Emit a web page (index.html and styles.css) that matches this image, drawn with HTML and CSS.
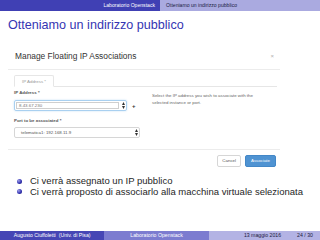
FILE: index.html
```html
<!DOCTYPE html>
<html lang="it">
<head>
    <meta charset="UTF-8">
    <title>Otteniamo un indirizzo pubblico</title>
    <link rel="stylesheet" href="styles.css">
</head>
<body>
    <!-- Barra superiore -->
    <div class="headline">
        <div class="head-left">Laboratorio Openstack</div>
        <div class="head-right">Otteniamo un indirizzo pubblico</div>
    </div>

    <h1 class="frametitle">Otteniamo un indirizzo pubblico</h1>

    <!-- Schermata del dialogo -->
    <div class="modal">
        <div class="modal-header">
            <span class="modal-title">Manage Floating IP Associations</span>
            <span class="close">&times;</span>
        </div>
        <div class="modal-body">
            <div class="tabs">
                <div class="tab">IP Address *</div>
            </div>
            <div class="form">
                <div class="fields">
                    <div class="label first">IP Address *</div>
                    <div class="ip-row">
                        <div class="ip-select">
                            <div class="ip-value">8.43.67.230</div>
                            <svg class="arrows" width="3" height="7" viewBox="0 0 3 7"><path d="M0 3 L1.5 0 L3 3 Z M0 4 L1.5 7 L3 4 Z" fill="#333"/></svg>
                        </div>
                        <span class="plus">+</span>
                    </div>
                    <div class="label">Port to be associated *</div>
                    <div class="port-select">
                        <span>telematica1: 192.168.11.9</span>
                        <svg class="arrows" width="3" height="7" viewBox="0 0 3 7"><path d="M0 3 L1.5 0 L3 3 Z M0 4 L1.5 7 L3 4 Z" fill="#333"/></svg>
                    </div>
                </div>
                <p class="help">Select the IP address you wish to associate with the<br>selected instance or port.</p>
            </div>
        </div>
        <div class="modal-footer">
            <span class="btn">Cancel</span>
            <span class="btn btn-primary">Associate</span>
        </div>
    </div>

    <ul class="bullets">
        <li>Ci verrà assegnato un IP pubblico</li>
        <li>Ci verrà proposto di associarlo alla macchina virtuale selezionata</li>
    </ul>

    <!-- Barra inferiore -->
    <div class="footline">
        <div class="foot-author">Augusto Ciuffoletti&nbsp; (Univ. di Pisa)</div>
        <div class="foot-title">Laboratorio Openstack</div>
        <div class="foot-date"><span>13 maggio 2016</span><span>24 / 30</span></div>
    </div>
</body>
</html>
```

FILE: styles.css
```css
body {
    margin: 0;
    width: 320px;
    height: 240px;
    display: flex;
    flex-direction: column;
    font-family: "Liberation Sans", Arial, sans-serif;
    background: #fff;
    color: #262626;
    overflow: hidden;
}
.headline {
    display: flex;
    height: 11px;
    font-size: 5.1px;
    line-height: 11px;
}
.head-left {
    width: 160px;
    box-sizing: border-box;
    padding-right: 5px;
    text-align: right;
    background: #4040b4;
    color: #fff;
}
.head-right {
    flex: 1;
    padding-left: 6px;
    background: #aaaae0;
    color: #1a1a40;
}
.frametitle {
    margin: 7px 0 0 8px;
    font-size: 12.6px;
    line-height: 15px;
    font-weight: normal;
    color: #3535b3;
}
.modal {
    margin: 7px 40px 0 8px;
    color: #333;
}
.modal-header {
    display: flex;
    justify-content: space-between;
    align-items: center;
    padding: 11px 6px 8px 7px;
    border-bottom: 1px solid #ececec;
}
.modal-title {
    font-size: 8.4px;
    line-height: 10px;
}
.close {
    font-size: 6px;
    line-height: 10px;
    color: #b0b0b0;
}
.modal-body {
    height: 79px;
    box-sizing: border-box;
    padding: 5px 3px 0 6px;
}
.tabs {
    display: flex;
    height: 11px;
    border-bottom: 1px solid #e6e6e6;
}
.tab {
    width: 40px;
    box-sizing: border-box;
    border: 1px solid #e6e6e6;
    border-bottom-color: #fff;
    border-radius: 2px 2px 0 0;
    margin-bottom: -1px;
    padding-left: 7px;
    font-size: 4.4px;
    line-height: 11px;
    color: #9a9a9a;
    background: #fff;
}
.form {
    display: flex;
    gap: 12px;
}
.fields {
    width: 126px;
}
.label {
    margin-top: 7px;
    font-size: 4.4px;
    line-height: 6px;
    font-weight: bold;
    color: #555;
}
.label.first {
    margin-top: 3px;
}
.ip-row {
    display: flex;
    align-items: center;
    margin-top: 4px;
    height: 11px;
}
.ip-select {
    display: flex;
    align-items: center;
    justify-content: space-between;
    width: 113px;
    height: 11px;
    box-sizing: border-box;
    padding: 1px;
    border: 1px solid #a9d0f0;
    border-radius: 2px;
    box-shadow: 0 0 2px rgba(102, 175, 233, 0.4);
}
.ip-value {
    width: 103px;
    height: 7px;
    box-sizing: border-box;
    border: 1px solid #cfcfcf;
    padding-left: 2px;
    font-size: 4.4px;
    line-height: 5px;
    color: #777;
}
.plus {
    margin-left: 5px;
    font-size: 6px;
    font-weight: bold;
    color: #333;
}
.port-select {
    display: flex;
    align-items: center;
    justify-content: space-between;
    margin-top: 3px;
    height: 11px;
    box-sizing: border-box;
    padding: 0 1px 0 6px;
    border: 1px solid #d6d6d6;
    border-radius: 2px;
    font-size: 4.4px;
    color: #555;
}
.help {
    margin: 5px 0 0;
    font-size: 4.4px;
    line-height: 7px;
    color: #666;
    white-space: nowrap;
}
.modal-footer {
    display: flex;
    justify-content: flex-end;
    gap: 4px;
    padding: 5px 4px 0 0;
    border-top: 1px solid #ececec;
}
.btn {
    height: 12px;
    box-sizing: border-box;
    border: 1px solid #d6d6d6;
    border-radius: 2px;
    padding: 0 4px;
    font-size: 4.4px;
    line-height: 10px;
    color: #555;
    background: #fff;
}
.btn-primary {
    width: 31px;
    text-align: center;
    background: #4f93d2;
    border-color: #4387c7;
    color: #fff;
}
.bullets {
    list-style: none;
    margin: 9px 0 0;
    padding: 0 0 0 17px;
    font-size: 9.5px;
    line-height: 10.5px;
}
.bullets li {
    display: flex;
    align-items: center;
}
.bullets li::before {
    content: "";
    width: 5px;
    height: 5px;
    margin-right: 8px;
    border-radius: 50%;
    background: radial-gradient(circle at 35% 35%, #a0a0e8 0%, #3333b3 55%, #1a1a6a 100%);
}
.footline {
    margin-top: auto;
    display: flex;
    height: 9px;
    font-size: 5.2px;
    line-height: 9px;
}
.footline > div {
    flex: 1;
}
.foot-author {
    background: #4646b5;
    color: #fff;
    text-align: center;
}
.foot-title {
    background: #7c7cd0;
    color: #fff;
    text-align: center;
}
.foot-date {
    display: flex;
    justify-content: flex-end;
    gap: 16px;
    padding-right: 7px;
    background: #b3b3e4;
    color: #1a1a40;
}
```
